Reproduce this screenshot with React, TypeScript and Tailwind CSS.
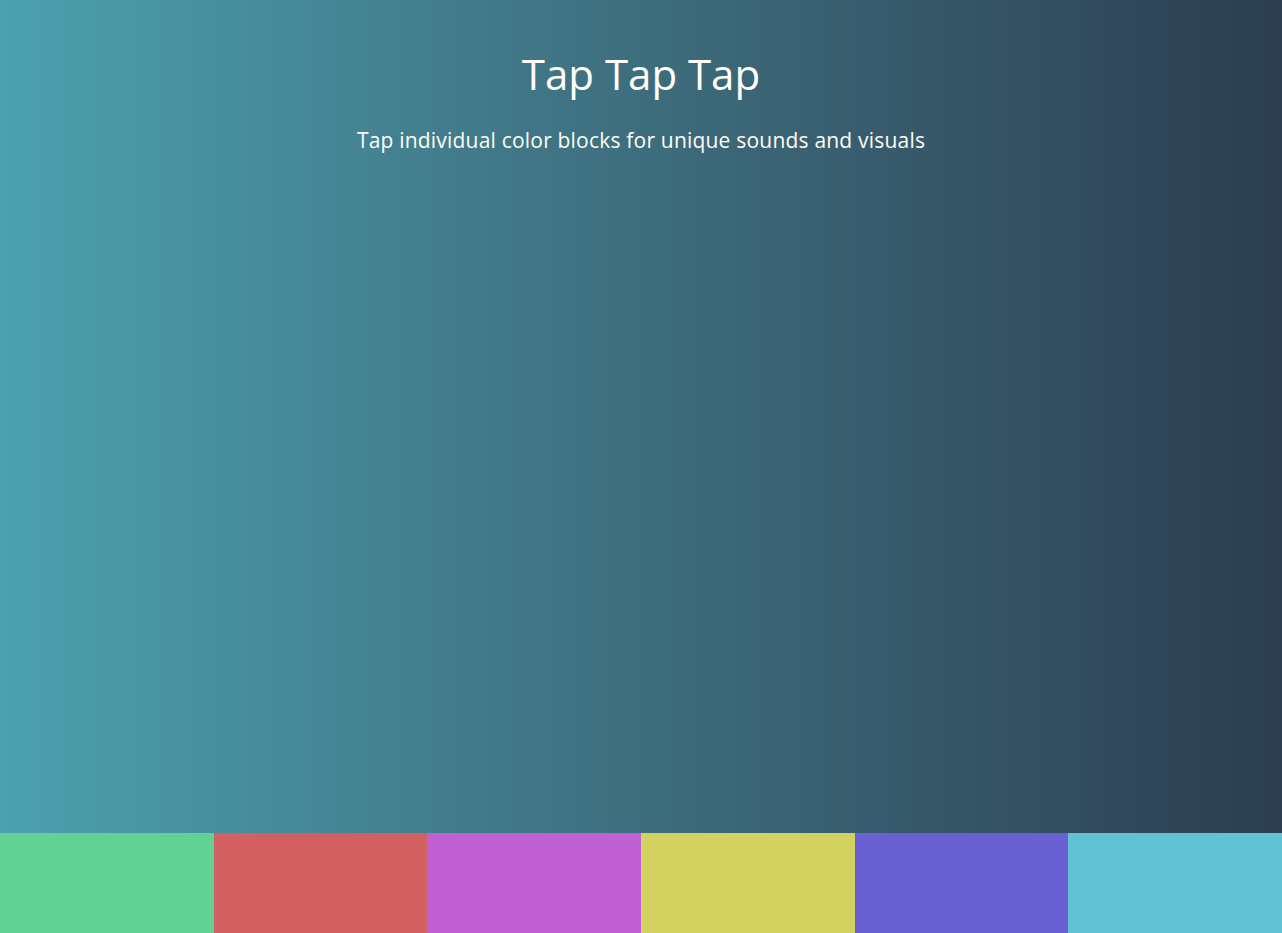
const pads = [
  'bg-[#60d394]',
  'bg-[#d36060]',
  'bg-[#c160d3]',
  'bg-[#d3d160]',
  'bg-[#6860d3]',
  'bg-[#60c2d3]',
]

export default function App() {
  return (
    <div className="flex h-[933px] flex-col justify-between bg-gradient-to-r from-[#4ca1af] to-[#2c3e50] font-['Open_Sans',sans-serif] text-[#fffdf5]">
      <header className="pt-[44px] text-center">
        <h1 className="text-[42px] font-medium leading-[60px]">Tap Tap Tap</h1>
        <p className="mt-[22px] text-[21px] font-medium leading-[28px] tracking-[0.2px]">
          Tap individual color blocks for unique sounds and visuals
        </p>
      </header>
      <div className="flex h-[100px]">
        {pads.map((c, i) => (
          <div key={i} className={`flex-1 ${c}`} />
        ))}
      </div>
    </div>
  )
}
